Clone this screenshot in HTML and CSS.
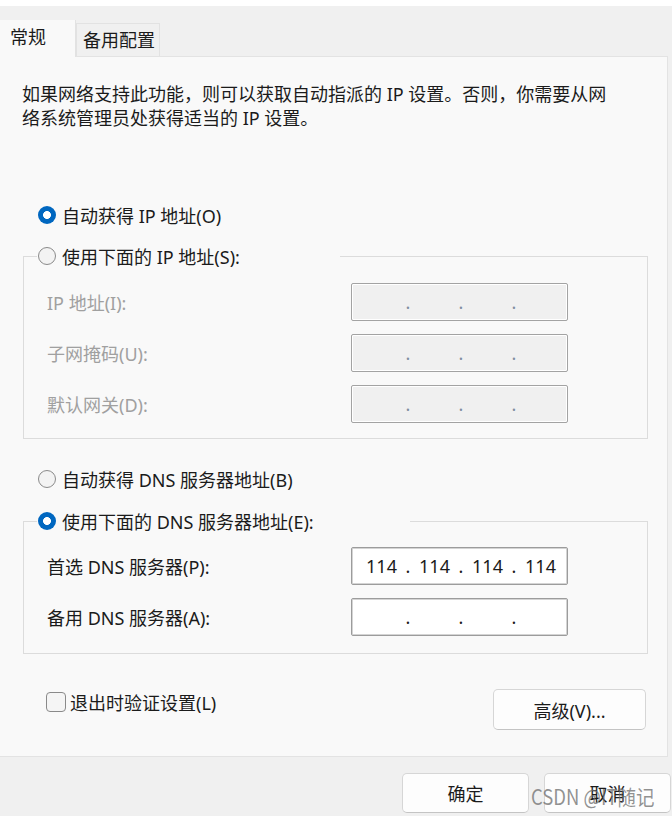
FILE: index.html
```html
<!DOCTYPE html>
<html lang="zh-CN">
<head>
<meta charset="utf-8">
<title>Internet 协议版本 4 (TCP/IPv4) 属性</title>
<link rel="stylesheet" href="styles.css">
</head>
<body>
<div class="window">
  <div class="topstrip"></div>
  <div class="tabs">
    <div class="tab active">常规</div>
    <div class="tab">备用配置</div>
  </div>
  <div class="panel">
    <p class="desc">如果网络支持此功能，则可以获取自动指派的 IP 设置。否则，你需要从网<br>络系统管理员处获得适当的 IP 设置。</p>

    <div class="option opt-ip-auto"><span class="radio checked"></span><span>自动获得 IP 地址(O)</span></div>

    <fieldset class="group group-ip">
      <legend class="option legend-ip"><span class="radio"></span><span>使用下面的 IP 地址(S):</span></legend>
      <div class="rows rows-ip">
        <div class="row disabled"><span class="label">IP 地址(I):</span>
          <div class="ipbox"><span class="oct"></span><span class="dot">.</span><span class="oct"></span><span class="dot">.</span><span class="oct"></span><span class="dot">.</span><span class="oct"></span></div>
        </div>
        <div class="row disabled"><span class="label">子网掩码(U):</span>
          <div class="ipbox"><span class="oct"></span><span class="dot">.</span><span class="oct"></span><span class="dot">.</span><span class="oct"></span><span class="dot">.</span><span class="oct"></span></div>
        </div>
        <div class="row disabled"><span class="label">默认网关(D):</span>
          <div class="ipbox"><span class="oct"></span><span class="dot">.</span><span class="oct"></span><span class="dot">.</span><span class="oct"></span><span class="dot">.</span><span class="oct"></span></div>
        </div>
      </div>
    </fieldset>

    <div class="option opt-dns-auto"><span class="radio"></span><span>自动获得 DNS 服务器地址(B)</span></div>

    <fieldset class="group group-dns">
      <legend class="option legend-dns"><span class="radio checked"></span><span>使用下面的 DNS 服务器地址(E):</span></legend>
      <div class="rows rows-dns">
        <div class="row"><span class="label">首选 DNS 服务器(P):</span>
          <div class="ipbox"><span class="oct">114</span><span class="dot">.</span><span class="oct">114</span><span class="dot">.</span><span class="oct">114</span><span class="dot">.</span><span class="oct">114</span></div>
        </div>
        <div class="row"><span class="label">备用 DNS 服务器(A):</span>
          <div class="ipbox"><span class="oct"></span><span class="dot">.</span><span class="oct"></span><span class="dot">.</span><span class="oct"></span><span class="dot">.</span><span class="oct"></span></div>
        </div>
      </div>
    </fieldset>

    <div class="bottom-row">
      <div class="check"><span class="box"></span><span>退出时验证设置(L)</span></div>
      <button class="btn adv">高级(V)...</button>
    </div>
  </div>
  <div class="footer">
    <button class="btn foot">确定</button>
    <button class="btn foot">取消</button>
  </div>
  <div class="watermark">CSDN @IT随记</div>
</div>
</body>
</html>
```

FILE: styles.css
```css
* { box-sizing: border-box; }

html, body {
  margin: 0;
  padding: 0;
}

body {
  width: 672px;
  height: 816px;
  overflow: hidden;
  background: #f0f0f0;
  font-family: "Noto Sans", "Noto Sans CJK SC", sans-serif;
  font-size: 18px;
  color: #1b1b1b;
}

.window {
  position: relative;
  width: 672px;
  height: 816px;
}

.topstrip {
  height: 6px;
  background: #ffffff;
}

.tabs {
  height: 50px;
  display: flex;
  align-items: flex-end;
  background: #f0f0f0;
}

.tab {
  height: 33px;
  width: 84px;
  padding-left: 6px;
  line-height: 33px;
  background: #f0f0f0;
  border: 1px solid #e2e2e2;
  border-bottom: none;
  white-space: nowrap;
}

.tab.active {
  position: relative;
  z-index: 1;
  width: 76px;
  height: 37px;
  margin-bottom: -1px;
  padding-left: 10px;
  line-height: 34px;
  background: #f9f9f9;
  border: none;
  border-right: 1px solid #e2e2e2;
}

.panel {
  width: 668px;
  height: 701px;
  padding: 25px 0 0 22px;
  background: #f9f9f9;
  border-top: 1px solid #e3e3e3;
  border-right: 1px solid #e3e3e3;
  border-bottom: 1px solid #e3e3e3;
}

.desc {
  margin: 0;
  line-height: 24px;
  white-space: nowrap;
}

.option {
  display: flex;
  align-items: center;
  height: 26px;
  white-space: nowrap;
}

.option .radio { margin-right: 6px; }

.opt-ip-auto {
  margin-top: 72px;
  margin-left: 16px;
}

.opt-dns-auto {
  margin-top: 27px;
  margin-left: 16px;
}

.radio {
  display: inline-block;
  flex: none;
  width: 18px;
  height: 18px;
  border-radius: 50%;
  border: 1px solid #8a8a8a;
  background: #f3f3f3;
}

.radio.checked {
  border: none;
  background: radial-gradient(circle, #ffffff 0 3.6px, #0067c0 4.3px);
}

.group {
  width: 625px;
  margin: 0 0 0 1px;
  padding: 0;
  border: 1px solid #dcdcdc;
  min-width: 0;
}

.group-ip { margin-top: 15px; }
.group-dns { margin-top: 16px; }

.group legend {
  margin-left: 13px;
  padding: 0 0 0 1px;
}

.legend-ip { width: 303px; }
.legend-dns { width: 373px; }

.rows {
  display: flex;
  flex-direction: column;
  gap: 13px;
  padding-left: 23px;
}

.rows-ip { padding-top: 14px; padding-bottom: 15px; }
.rows-dns { padding-top: 13px; padding-bottom: 17px; }

.row {
  display: flex;
  align-items: center;
  height: 38px;
}

.label {
  width: 304px;
  white-space: nowrap;
}

.row.disabled .label { color: #a0a0a0; }

.ipbox {
  width: 217px;
  height: 38px;
  display: flex;
  align-items: center;
  padding-left: 9px;
  background: #ffffff;
  border: 1px solid #9c9c9c;
  border-radius: 2px;
  box-shadow: inset 0 0 0 1px #d4d4d4;
  font-size: 18px;
}

.row.disabled .ipbox {
  background: #f0f0f0;
  border-color: #a3a3a3;
  box-shadow: inset 0 0 0 1px #ffffff;
}

.oct {
  width: 41px;
  text-align: center;
  line-height: 24px;
}

.dot {
  width: 12px;
  text-align: center;
  line-height: 24px;
}

.row.disabled .dot { color: #7f8da0; }

.bottom-row {
  display: flex;
  align-items: flex-start;
  margin-top: 35px;
  padding-right: 21px;
}

.check {
  display: flex;
  align-items: center;
  height: 26px;
  margin-left: 24px;
  white-space: nowrap;
}

.check .box {
  width: 20px;
  height: 20px;
  margin-right: 4px;
  border: 1px solid #8a8a8a;
  border-radius: 4px;
  background: #f5f5f5;
}

.btn {
  font-family: inherit;
  font-size: 18px;
  color: #1b1b1b;
  background: #fdfdfd;
  border: 1px solid #d6d6d6;
  border-bottom-color: #c4c4c4;
  border-radius: 5px;
  padding: 0;
}

.adv {
  margin-left: auto;
  width: 153px;
  height: 41px;
}

.footer {
  display: flex;
  justify-content: flex-end;
  gap: 15px;
  padding-top: 16px;
  padding-right: 1px;
}

.foot {
  width: 127px;
  height: 40px;
}

.watermark {
  position: absolute;
  left: 531px;
  top: 782px;
  font-family: "Noto Sans CJK SC", sans-serif;
  font-size: 21px;
  line-height: 28px;
  color: rgba(110, 110, 110, 0.75);
  transform: scaleX(0.88);
  transform-origin: left center;
  white-space: nowrap;
  pointer-events: none;
}
```
